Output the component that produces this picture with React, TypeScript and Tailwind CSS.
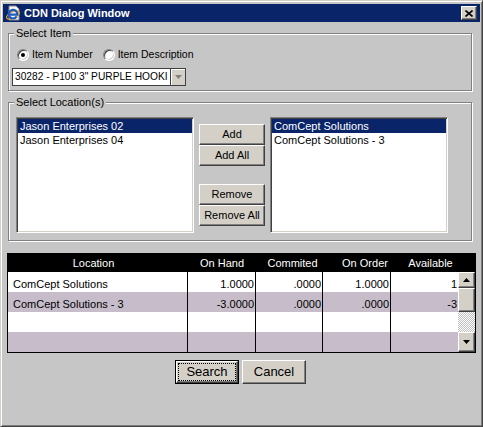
import React from "react";

const raised =
  "border border-t-white border-l-white border-r-[#404040] border-b-[#404040] shadow-[inset_-1px_-1px_#808080] bg-[#d4d0c8]";
const sunken =
  "border border-t-[#808080] border-l-[#808080] border-r-white border-b-white shadow-[inset_1px_1px_#404040,inset_-1px_-1px_#d4d0c8]";
const etched = "border border-[#808080] shadow-[inset_1px_1px_#fff,1px_1px_#fff]";

function IeIcon() {
  return (
    <svg width="16" height="16" viewBox="0 0 16 16">
      <path d="M4 1h7l3 3v11H4z" fill="#f4f4f4" stroke="#8a8a8a" strokeWidth="1" />
      <ellipse cx="8" cy="10" rx="7" ry="3.2" fill="none" stroke="#e8a21a" strokeWidth="1.2" transform="rotate(-25 8 10)" />
      <path d="M11.6 11.6A4.3 4.3 0 1 1 12.3 9.6H4.6" fill="none" stroke="#1b5cc4" strokeWidth="2.2" />
    </svg>
  );
}

function Radio({ checked, label }: { checked?: boolean; label: string }) {
  return (
    <label className="flex items-center gap-[3px]">
      <span
        className={`flex h-[12px] w-[12px] items-center justify-center rounded-full bg-white ${sunken}`}
      >
        {checked && <span className="h-[4px] w-[4px] rounded-full bg-black" />}
      </span>
      <span className="text-[10.5px]">{label}</span>
    </label>
  );
}

function ListBox({ items, w }: { items: string[]; w: string }) {
  return (
    <div className={`h-[116px] ${w} bg-white p-[1px] ${sunken}`}>
      {items.map((it, i) => (
        <div
          key={it}
          className={`h-[14px] pl-[2px] leading-[14px] ${i === 0 ? "bg-[#0a246a] text-white" : ""}`}
        >
          {it}
        </div>
      ))}
    </div>
  );
}

function Arrow({ down }: { down?: boolean }) {
  return (
    <svg width="7" height="4" viewBox="0 0 7 4">
      <polygon points={down ? "0,0 7,0 3.5,4" : "0,4 7,4 3.5,0"} fill="#000" />
    </svg>
  );
}

const rows = [
  { loc: "ComCept Solutions", onHand: "1.0000", com: ".0000", onOrder: "1.0000", avail: "1" },
  { loc: "ComCept Solutions - 3", onHand: "-3.0000", com: ".0000", onOrder: ".0000", avail: "-3" },
  { loc: "", onHand: "", com: "", onOrder: "", avail: "" },
  { loc: "", onHand: "", com: "", onOrder: "", avail: "" },
];

export default function App() {
  return (
    <div className="h-[427px] w-[483px] overflow-hidden border border-t-[#d4d0c8] border-l-[#d4d0c8] border-r-[#404040] border-b-[#404040] bg-[#c6c6c6] px-[2px] pt-[3px] text-[11px] text-black shadow-[inset_1px_1px_#fff,inset_-1px_-1px_#808080] font-[family-name:'Liberation_Sans',Arial,sans-serif]">
      {/* title bar */}
      <div className="flex h-[18px] items-center bg-[#0a246a] pl-[2px] pr-[3px]">
        <IeIcon />
        <span className="ml-[3px] flex-1 font-bold text-white">CDN Dialog Window</span>
        <button className={`flex h-[14px] w-[16px] items-center justify-center ${raised}`}>
          <svg width="8" height="7" viewBox="0 0 8 7">
            <path d="M0.5 0.5L7.5 6.5M7.5 0.5L0.5 6.5" stroke="#000" strokeWidth="1.6" />
          </svg>
        </button>
      </div>

      {/* select item */}
      <fieldset className={`ml-[5px] mt-[5px] w-[464px] pb-[4px] ${etched}`}>
        <legend className="ml-[5px] bg-[#c6c6c6] px-[2px] leading-[13px]">Select Item</legend>
        <div className="ml-[8px] mt-[8px] flex h-[13px] items-center gap-[10px]">
          <Radio checked label="Item Number" />
          <Radio label="Item Description" />
        </div>
        <div className="ml-[3px] mt-[7px] flex h-[18px] w-[174px] border border-[#404040] bg-white">
          <div className="flex-1 overflow-hidden whitespace-nowrap pl-[2px] text-[10.2px] leading-[16px]">
            30282 - P100 3" PURPLE HOOKI
          </div>
          <div className="flex w-[15px] items-center justify-center border-l border-[#404040] bg-[#d4d0c8] shadow-[inset_1px_1px_#fff]">
            <svg width="7" height="4" viewBox="0 0 7 4">
              <polygon points="0,0 7,0 3.5,4" fill="#808080" />
            </svg>
          </div>
        </div>
      </fieldset>

      {/* select locations */}
      <fieldset className={`ml-[5px] mt-[5px] w-[464px] pb-[7px] ${etched}`}>
        <legend className="ml-[5px] bg-[#c6c6c6] px-[2px] leading-[13px]">Select Location(s)</legend>
        <div className="ml-[7px] mt-[8px] flex gap-[5px]">
          <ListBox items={["Jason Enterprises 02", "Jason Enterprises 04"]} w="w-[178px]" />
          <div className="mt-[7px] flex w-[66px] flex-col">
            <button className={`h-[21px] ${raised}`}>Add</button>
            <button className={`h-[21px] ${raised}`}>Add All</button>
            <button className={`mt-[18px] h-[21px] ${raised}`}>Remove</button>
            <button className={`h-[21px] ${raised}`}>Remove All</button>
          </div>
          <ListBox items={["ComCept Solutions", "ComCept Solutions - 3"]} w="w-[178px]" />
        </div>
      </fieldset>

      {/* results grid */}
      <div className="ml-[4px] mt-[12px] w-[469px] border border-black">
        <div className="grid h-[18px] grid-cols-[180px_68px_67px_68px_67px_17px] items-center bg-black text-white">
          <div className="pr-[9px] text-center">Location</div>
          <div className="text-center">On Hand</div>
          <div className="pl-[6px] text-center">Commited</div>
          <div className="pl-[16px] text-center">On Order</div>
          <div className="pl-[12px] text-center">Available</div>
          <div />
        </div>
        <div className="flex">
          <div className="flex-1">
            {rows.map((r, i) => (
              <div
                key={i}
                className={`grid h-[20px] grid-cols-[180px_68px_67px_68px_67px] ${i % 2 ? "bg-[#c7bdca]" : "bg-white"}`}
              >
                <div className="border-r border-black pl-[5px] pt-[4px]">{r.loc}</div>
                <div className="border-r border-black pr-[1px] pt-[4px] text-right">{r.onHand}</div>
                <div className="border-r border-black pr-[1px] pt-[4px] text-right">{r.com}</div>
                <div className="border-r border-black pr-[1px] pt-[4px] text-right">{r.onOrder}</div>
                <div className="pr-[1px] pt-[4px] text-right">{r.avail}</div>
              </div>
            ))}
          </div>
          <div className="flex w-[17px] flex-col">
            <div className={`flex h-[16px] items-center justify-center ${raised}`}>
              <Arrow />
            </div>
            <div className={`h-[24px] ${raised}`} />
            <div className="h-[20px] bg-[repeating-conic-gradient(#c0c0c0_0_25%,#ffffff_0_50%)] bg-[length:2px_2px]" />
            <div className={`flex h-[20px] items-center justify-center ${raised}`}>
              <Arrow down />
            </div>
          </div>
        </div>
      </div>

      {/* actions */}
      <div className="mt-[7px] flex justify-center gap-[3px] pr-[2px] text-[13px]">
        <button className="h-[24px] w-[64px] border border-black p-0">
          <div className={`flex h-full w-full p-[1px] ${raised}`}>
            <span className="flex flex-1 items-center justify-center border border-dotted border-black">
              Search
            </span>
          </div>
        </button>
        <button className={`h-[24px] w-[64px] ${raised}`}>Cancel</button>
      </div>
    </div>
  );
}
